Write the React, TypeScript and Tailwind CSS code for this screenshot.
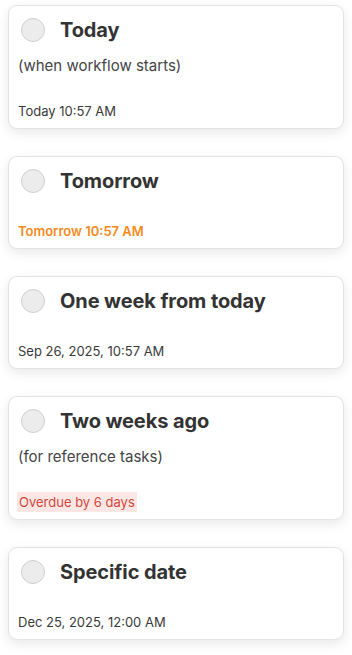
import React from "react";

type Item = {
  title: string;
  subtitle?: string;
  date: string;
  kind: "normal" | "soon" | "overdue";
};

const items: Item[] = [
  { title: "Today", subtitle: "(when workflow starts)", date: "Today 10:57 AM", kind: "normal" },
  { title: "Tomorrow", date: "Tomorrow 10:57 AM", kind: "soon" },
  { title: "One week from today", date: "Sep 26, 2025, 10:57 AM", kind: "normal" },
  { title: "Two weeks ago", subtitle: "(for reference tasks)", date: "Overdue by 6 days", kind: "overdue" },
  { title: "Specific date", date: "Dec 25, 2025, 12:00 AM", kind: "normal" },
];

function Card({ item }: { item: Item }) {
  return (
    <div className="bg-white border border-[#e3e3e3] rounded-[9px] shadow-[0_4px_12px_rgba(0,0,0,0.09)] pt-[8px] pb-[8px] px-[9px]">
      <div className="flex items-center h-[32px]">
        <div className="ml-[3px] w-[24px] h-[24px] rounded-full bg-[#ececec] border border-[#cfcfcf] shrink-0" />
        <div className="ml-[15px] text-[20px] font-bold text-[#333333] leading-[28px] tracking-[-0.1px]">
          {item.title}
        </div>
      </div>
      {item.subtitle && (
        <div className="mt-[10px] text-[15px] leading-[20px] text-[#444444]">{item.subtitle}</div>
      )}
      <div className={item.subtitle ? "mt-[26px] flex" : "mt-[25px] flex"}>
        {item.kind === "overdue" ? (
          <span className="-ml-[1px] -my-[1px] px-[2px] bg-[#fde7e5] text-[#d2483c] text-[13px] leading-[20px]">
            {item.date}
          </span>
        ) : item.kind === "soon" ? (
          <div className="text-[13px] leading-[18px] font-semibold text-[#f78a1d]">{item.date}</div>
        ) : (
          <div className="text-[13px] leading-[18px] text-[#3a3a3a]">{item.date}</div>
        )}
      </div>
    </div>
  );
}

export default function App() {
  return (
    <div
      className="w-[352px] min-h-[655px] bg-white px-[8px] pt-[5px] pb-[16px] flex flex-col gap-[27px]"
      style={{ fontFamily: "Inter, 'Noto Sans', sans-serif" }}
    >
      {items.map((it, i) => (
        <Card key={i} item={it} />
      ))}
    </div>
  );
}
